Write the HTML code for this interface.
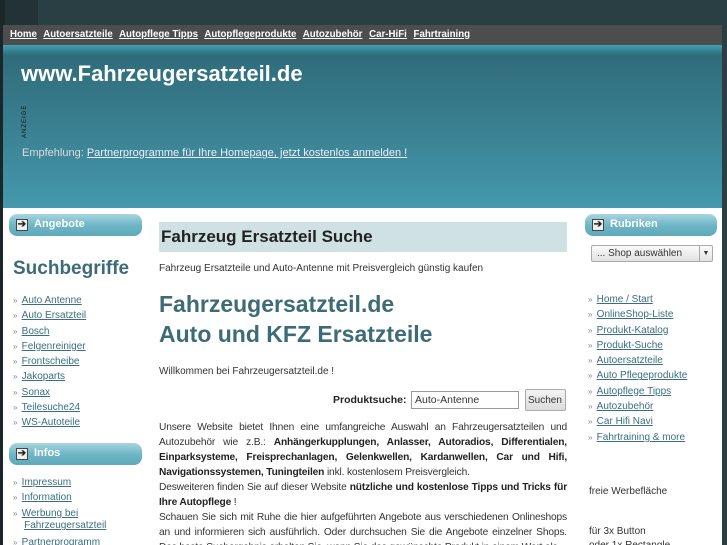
<!DOCTYPE html>
<html><head><meta charset="utf-8"><style>
*{margin:0;padding:0;box-sizing:border-box}
html{height:545px;overflow:hidden}
body{width:727px;height:545px;overflow:hidden;background:#2a3f44;font-family:"Liberation Sans",sans-serif;font-size:11px;color:#333;position:relative}
.ls{position:absolute;left:0;top:0;width:5px;height:545px;background:#1a2628}
.lt{position:absolute;left:5px;top:0;width:33px;height:25px;background:#223236}
.wrap{position:absolute;left:3px;top:25px;width:719px;height:520px;background:#fff;overflow:hidden}
.nav{height:20px;background:#4d4d4d;padding:4px 0 0 7px;font-size:9.7px;font-weight:bold;white-space:nowrap}
.nav a{color:#fff;text-decoration:underline;margin-right:4px}
.hdr{height:163px;background:linear-gradient(#44a0b3 0px,#2f6c7a 10px,#3b8294 90px,#4498ab 160px);position:relative;color:#fff}
.hdr h1{position:absolute;left:18px;top:16px;font-size:22px;font-weight:bold;color:#fff}
.anz{position:absolute;left:19px;top:93px;font-size:6px;transform:rotate(-90deg);transform-origin:left top;color:#111;letter-spacing:1px}
.emp{position:absolute;left:19px;top:102px;font-size:11px;color:#ddd}
.emp a{color:#eef;text-decoration:underline}
.bh{position:absolute;height:22px;border-radius:8px;background:linear-gradient(#a9d6e0,#6fb6c6 50%,#5ea9ba);color:#fff;font-weight:bold;font-size:11px;padding:4px 0 0 25px}
.bh i{position:absolute;left:7px;top:5px;width:12px;height:12px;background:#eee;border:1px solid #444;font-style:normal;color:#222;font-size:10px;line-height:10px;text-align:center}
ul{list-style:none;position:absolute}
li{font-size:10px;line-height:15.3px;color:#777}
li:before{content:"» ";font-size:8px;color:#888;margin-right:2px}
li a{color:#3a6f80;text-decoration:underline}
.c{position:absolute;left:156px;width:408px}
.just{text-align:justify;line-height:15px;font-size:10.2px;letter-spacing:-0.15px}
b{color:#222}
</style></head><body>
<div class="ls"></div><div class="lt"></div>
<div class="wrap">
<div class="nav"><a>Home</a> <a>Autoersatzteile</a> <a>Autopflege Tipps</a> <a>Autopflegeprodukte</a> <a>Autozubehör</a> <a>Car-HiFi</a> <a>Fahrtraining</a></div>
<div class="hdr"><h1>www.Fahrzeugersatzteil.de</h1><div class="anz">ANZEIGE</div>
<div class="emp">Empfehlung: <a>Partnerprogramme für Ihre Homepage, jetzt kostenlos anmelden !</a></div></div>
<div class="bh" style="left:6px;top:189px;width:133px"><i>➔</i>Angebote</div>
<div style="position:absolute;left:10px;top:233px;font-size:19px;font-weight:bold;color:#3d6c78">Suchbegriffe</div>
<ul style="left:10px;top:268px"><li><a>Auto Antenne</a></li><li><a>Auto Ersatzteil</a></li><li><a>Bosch</a></li><li><a>Felgenreiniger</a></li><li><a>Frontscheibe</a></li><li><a>Jakoparts</a></li><li><a>Sonax</a></li><li><a>Teilesuche24</a></li><li><a>WS-Autoteile</a></li></ul>
<div class="bh" style="left:6px;top:418px;width:133px"><i>➔</i>Infos</div>
<ul style="left:10px;top:450px"><li><a>Impressum</a></li><li><a>Information</a></li><li style="line-height:12.5px;padding:2px 0"><a>Werbung bei</a><br>&nbsp;&nbsp;&nbsp;&nbsp;<a>Fahrzeugersatzteil</a></li><li><a>Partnerprogramm</a></li></ul>
<div class="c" style="top:197px;height:30px;background:#d0e1e4;font-size:17px;font-weight:bold;color:#222;padding:5px 0 0 2px">Fahrzeug Ersatzteil Suche</div>
<div class="c" style="top:238px;font-size:10px">Fahrzeug Ersatzteile und Auto-Antenne mit Preisvergleich günstig kaufen</div>
<div class="c" style="top:264px;font-size:23px;font-weight:bold;color:#3d6c78;line-height:30px">Fahrzeugersatzteil.de<br>Auto und KFZ Ersatzteile</div>
<div class="c" style="top:341px;font-size:10px">Willkommen bei Fahrzeugersatzteil.de !</div>
<div style="position:absolute;left:330px;top:369px;font-weight:bold;font-size:10.5px;color:#222">Produktsuche:</div>
<div style="position:absolute;left:408px;top:366px;width:108px;height:18px;border:1px solid #999;font-size:10.5px;padding:2px 3px">Auto-Antenne</div>
<div style="position:absolute;left:522px;top:364px;width:41px;height:22px;border:1px solid #aaa;border-radius:2px;background:linear-gradient(#f4f4f4,#dcdcdc);font-size:10px;padding:5px 0 0 2px;white-space:nowrap">Suchen</div>
<div class="c just" style="top:395px">Unsere Website bietet Ihnen eine umfangreiche Auswahl an Fahrzeugersatzteilen und Autozubehör wie z.B.: <b>Anhängerkupplungen, Anlasser, Autoradios, Differentialen, Einparksysteme, Freisprechanlagen, Gelenkwellen, Kardanwellen, Car und Hifi, Navigationssystemen, Tuningteilen</b> inkl. kostenlosem Preisvergleich.<br>Desweiteren finden Sie auf dieser Website <b>nützliche und kostenlose Tipps und Tricks für Ihre Autopflege</b> !<br>Schauen Sie sich mit Ruhe die hier aufgeführten Angebote aus verschiedenen Onlineshops an und informieren sich ausführlich. Oder durchsuchen Sie die Angebote einzelner Shops. Das beste Suchergebnis erhalten Sie, wenn Sie das gewünschte Produkt in einem Wort als</div>
<div class="bh" style="left:582px;top:189px;width:132px"><i>➔</i>Rubriken</div>
<div style="position:absolute;left:588px;top:220px;width:122px;height:17px;border:1px solid #aaa;border-radius:2px;background:linear-gradient(#fafafa,#e2e2e2);font-size:10px;padding:2px 0 0 5px">... Shop auswählen<span style="position:absolute;right:0;top:0;width:13px;height:15px;border-left:1px solid #aaa;font-size:7px;text-align:center;line-height:15px">▼</span></div>
<ul style="left:585px;top:267px"><li><a>Home / Start</a></li><li><a>OnlineShop-Liste</a></li><li><a>Produkt-Katalog</a></li><li><a>Produkt-Suche</a></li><li><a>Autoersatzteile</a></li><li><a>Auto Pflegeprodukte</a></li><li><a>Autopflege Tipps</a></li><li><a>Autozubehör</a></li><li><a>Car Hifi Navi</a></li><li><a>Fahrtraining &amp; more</a></li></ul>
<div style="position:absolute;left:586px;top:461px;font-size:10px">freie Werbefläche</div>
<div style="position:absolute;left:586px;top:500px;font-size:10px;line-height:14px">für 3x Button<br>oder 1x Rectangle</div>
</div>
</body></html>
